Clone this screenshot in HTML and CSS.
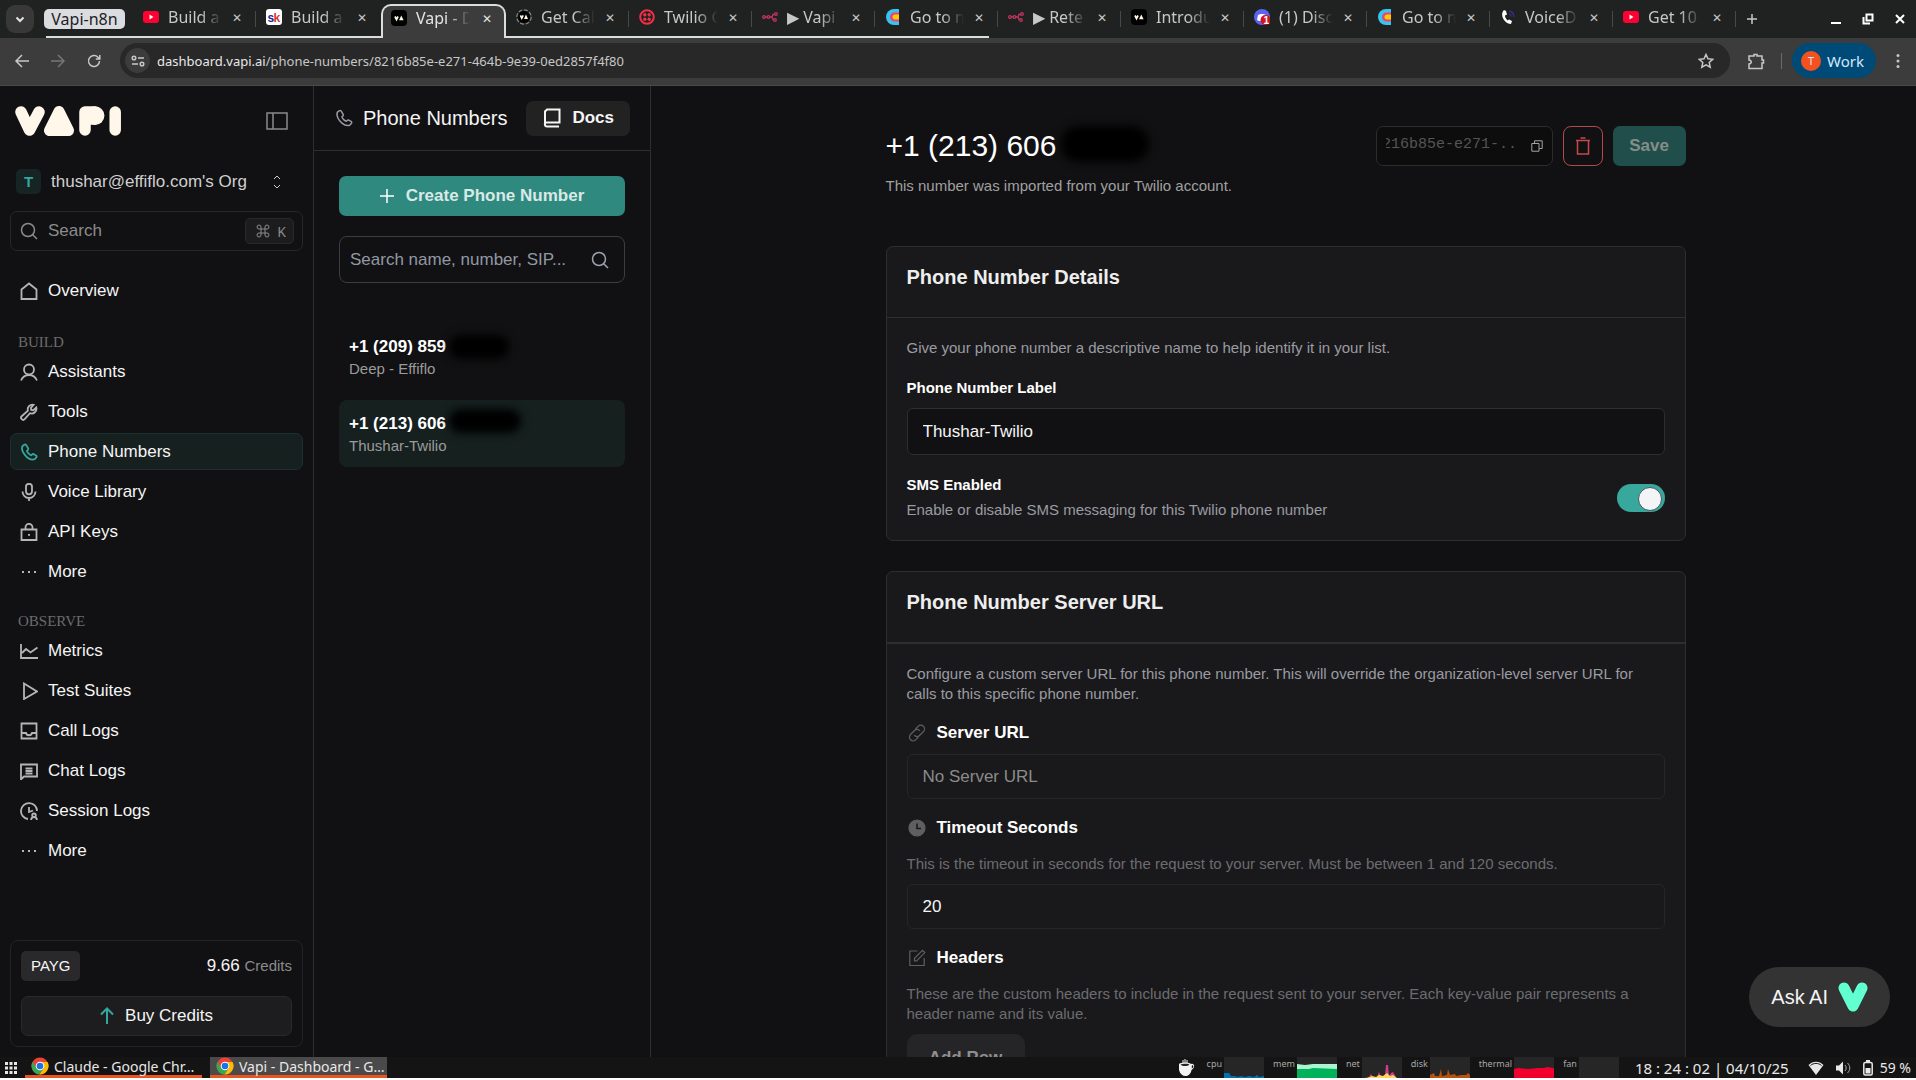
FILE: index.html
```html
<!DOCTYPE html>
<html lang="en">
<head>
  <meta charset="UTF-8">
  <title>Vapi - Dashboard</title>
  <link rel="stylesheet" href="styles.css">
</head>
<body>

<!-- Icon sprite -->
<svg class="sprite" aria-hidden="true">
  <symbol id="i-phone" viewBox="0 0 18 18"><path d="M4.2 1.8 2.6 3C.6 6.400 4 11.800 7 14.200c3 2.400 6 3 8.200 1.600l1.300-1.700c.4-.7.1-1.300-.5-1.700l-2.200-1.200c-.7-.3-1.300-.2-1.700.3l-.7.800c-1.600-.3-4-2.600-4.500-4.400l.9-.8c.5-.5.6-1 .3-1.700L6.600 2.600C6.100 1.600 5.200 1.200 4.200 1.800z"/></symbol>
  <symbol id="i-search" viewBox="0 0 18 18"><circle cx="8" cy="8" r="6.500"/><path d="M12.700 12.700 17 17"/></symbol>
  <symbol id="i-home" viewBox="0 0 18 18"><path d="M1.500 7.500 9 1.500l7.500 6V17h-15z"/></symbol>
  <symbol id="i-user" viewBox="0 0 18 18"><circle cx="9" cy="6.500" r="5"/><path d="M1 17.500c1.500-3.500 4.500-5.500 8-5.500s6.500 2 8 5.500"/></symbol>
  <symbol id="i-wrench" viewBox="0 0 18 18"><path d="M13.500 1.800a4.800 4.800 0 0 0-5.600 6L1.700 13.200a2 2 0 0 0 3 3L10 10.200a4.800 4.800 0 0 0 6.300-5.700l-3 2.700-2.100-.3-.3-2.100z"/></symbol>
  <symbol id="i-mic" viewBox="0 0 18 18"><rect x="6" y="0.800" width="6" height="10.500" rx="3"/><path d="M2.500 8.500a6.500 6.500 0 0 0 13 0M9 15v3"/></symbol>
  <symbol id="i-lock" viewBox="0 0 18 18"><path d="M1.500 6.500h15v10.500h-15zM5.500 6.500V4.300a3.500 3.500 0 0 1 7 0v2.200M8 11.800h2"/></symbol>
  <symbol id="i-dots" viewBox="0 0 18 18"><path d="M2 9h2M8 9h2M14 9h2"/></symbol>
  <symbol id="i-chart" viewBox="0 0 18 18"><path d="M1 2v14h17M2 11l4-4 4.500 3.500L17.500 5.500"/></symbol>
  <symbol id="i-play" viewBox="0 0 18 18"><path d="M4 1.500 17 9.500 4 17z"/></symbol>
  <symbol id="i-inbox" viewBox="0 0 18 18"><path d="M1.500 1.500h15v15h-15zM2 11h4c.5 3 5.500 3 6 0h4"/></symbol>
  <symbol id="i-chat" viewBox="0 0 18 18"><path d="M1 2.500h16v12H4L1 17.500zM5.500 6.500h7M5.500 9h7M5.500 11.500h7"/></symbol>
  <symbol id="i-session" viewBox="0 0 18 18"><path d="M8 17A8 8 0 1 1 17 9M9 5v5l4-1.500M11 18c.3-2 1.500-3 3-3s2.700 1 3 3"/><circle cx="14" cy="13.300" r="1.800"/></symbol>
  <symbol id="i-copy" viewBox="0 0 12 12"><path d="M.8 3.500H8v7.700H.8zM3.500 3.200V.8h7.700v7.700H8.300"/></symbol>
  <symbol id="i-chrome" viewBox="0 0 18 18"><circle cx="9" cy="9" r="8.500" fill="#ea4335"/><path d="M1.600 4.800A8.500 8.500 0 0 0 8.500 17.500L12.700 11 6 12z" fill="#34a853"/><path d="M16.500 5H9l4 6-4.500 6.500A8.500 8.500 0 0 0 16.500 5z" fill="#fbbc04"/><circle cx="9" cy="9" r="4.300" fill="#fff"/><circle cx="9" cy="9" r="3.300" fill="#1a73e8"/></symbol>
  <symbol id="i-yt" viewBox="0 0 16 16"><rect y="2" width="16" height="12" rx="3" fill="#ff0033"/><path d="M6.500 5.500v5l4-2.500z" fill="#fff"/></symbol>
  <symbol id="i-va" viewBox="0 0 16 16"><rect width="16" height="16" rx="4" fill="#000"/><path d="m4 6.500 1.500 3L7 6.500" fill="none" stroke="#fff8e7" stroke-width="1.800"/><path d="m10.300 5.500 2.300 4.800H8z" fill="#fff8e7"/></symbol>
  <symbol id="i-n8n" viewBox="0 0 16 16"><g fill="none" stroke="#c2345f" stroke-width="1.300"><circle cx="2" cy="8" r="1.300"/><circle cx="6.500" cy="8" r="1.300"/><path d="M3.300 8h2M8 8h2l1-2.500h2M10 8l1 2.500h1"/><circle cx="14" cy="5" r="1.300"/><circle cx="13" cy="11" r="1.300"/></g></symbol>
  <symbol id="i-goto" viewBox="0 0 16 16"><path d="M14 0H9a8 8 0 0 0 0 16h5z" fill="#36c5f0"/><path d="M14 3.500H9.500a4.500 4.500 0 0 0 0 9H14z" fill="#e8447a"/><path d="M14 5.500h-4a2.500 2.500 0 0 0 0 5h4z" fill="#ffc900"/></symbol>
</svg>

<!-- Browser tabs -->
<header class="tabstrip">
  <button class="tab-search" aria-label="Search tabs"><svg viewBox="0 0 10 10"><path d="m1.500 3.500 3.500 3.500 3.500-3.500"/></svg></button>
  <button class="tab-group">Vapi-n8n</button>
  <nav class="tabs">
    <div class="tab grouped"><svg class="favicon"><use href="#i-yt"/></svg><a href="#">Build a</a><button aria-label="Close">✕</button></div>
    <div class="tab grouped before-active"><svg class="favicon" viewBox="0 0 16 16"><rect width="16" height="16" rx="3" fill="#fff"/><text x="1.500" y="12.500" class="sk-blue">s</text><text x="7.500" y="12.500" class="sk-red">k</text></svg><a href="#">Build a</a><button aria-label="Close">✕</button></div>
    <div class="tab active"><svg class="favicon"><use href="#i-va"/></svg><a href="#">Vapi - D</a><button aria-label="Close">✕</button></div>
    <div class="tab grouped"><svg class="favicon" viewBox="0 0 20 20"><circle cx="10" cy="10" r="9" fill="none" stroke="#888" stroke-width="1.500" stroke-dasharray="5 2"/><circle cx="10" cy="10" r="7.500" fill="#000"/><path d="m5.500 8 1.700 3.500L9 8" fill="none" stroke="#fff8e7" stroke-width="2"/><path d="m12.500 7 2.500 5.500h-5z" fill="#fff8e7"/></svg><a href="#">Get Cal</a><button aria-label="Close">✕</button></div>
    <div class="tab grouped"><svg class="favicon" viewBox="0 0 16 16"><circle cx="8" cy="8" r="6.800" fill="none" stroke="#f22f46" stroke-width="2"/><g fill="#f22f46"><circle cx="5.800" cy="5.800" r="1.700"/><circle cx="10.200" cy="5.800" r="1.700"/><circle cx="5.800" cy="10.200" r="1.700"/><circle cx="10.200" cy="10.200" r="1.700"/></g></svg><a href="#">Twilio C</a><button aria-label="Close">✕</button></div>
    <div class="tab grouped"><svg class="favicon"><use href="#i-n8n"/></svg><a href="#">▶ Vapi</a><button aria-label="Close">✕</button></div>
    <div class="tab grouped group-end"><svg class="favicon"><use href="#i-goto"/></svg><a href="#">Go to n</a><button aria-label="Close">✕</button></div>
    <div class="tab"><svg class="favicon"><use href="#i-n8n"/></svg><a href="#">▶ Rete</a><button aria-label="Close">✕</button></div>
    <div class="tab"><svg class="favicon"><use href="#i-va"/></svg><a href="#">Introdu</a><button aria-label="Close">✕</button></div>
    <div class="tab"><svg class="favicon" viewBox="0 0 16 16"><circle cx="8" cy="8" r="8" fill="#5865f2"/><path d="M4 6c2-1.500 6-1.500 8 0l1 5-2 1H5l-2-1z" fill="#fff"/><circle cx="11.500" cy="11" r="5" fill="#d9101c"/><text x="9.500" y="14.500" class="badge-num">1</text></svg><a href="#">(1) Disc</a><button aria-label="Close">✕</button></div>
    <div class="tab"><svg class="favicon"><use href="#i-goto"/></svg><a href="#">Go to n</a><button aria-label="Close">✕</button></div>
    <div class="tab"><svg class="favicon" viewBox="0 0 16 16"><path d="M4 1c-5 5 1 14 7 14l1-3-3-1.500-1.500 1C5.500 9.500 5 8 5 6.500L7 5.500 6 2z" fill="#fff"/><path d="M9 4.500c1.500.5 2 1.500 2 3M9.500 2c3 .8 4.500 3 4.300 6" fill="none" stroke="#3d2b8c" stroke-width="1.300"/></svg><a href="#">VoiceD</a><button aria-label="Close">✕</button></div>
    <div class="tab"><svg class="favicon"><use href="#i-yt"/></svg><a href="#">Get 10</a><button aria-label="Close">✕</button></div>
  </nav>
  <button class="new-tab" aria-label="New tab"><svg viewBox="0 0 12 12"><path d="M6 1v10M1 6h10"/></svg></button>
  <div class="window-buttons">
    <button aria-label="Minimize"><svg viewBox="0 0 12 12"><path d="M1 10h10"/></svg></button>
    <button aria-label="Restore"><svg viewBox="0 0 12 12"><path d="M4.500 1.500h6v6h-6zM1.500 4v6.500H8"/></svg></button>
    <button aria-label="Close window"><svg viewBox="0 0 12 12"><path d="m2 2 8 8M10 2l-8 8"/></svg></button>
  </div>
</header>

<div class="toolbar">
  <div class="nav-buttons">
    <button aria-label="Back"><svg viewBox="0 0 16 16"><path d="M15 8H2M8 2 2 8l6 6"/></svg></button>
    <button class="dim" aria-label="Forward"><svg viewBox="0 0 16 16"><path d="M1 8h13M8 2l6 6-6 6"/></svg></button>
    <button aria-label="Reload"><svg viewBox="0 0 16 16"><path d="M13.500 8A5.500 5.500 0 1 1 12 4.200l1.500 1.500M13.800 2v4h-4"/></svg></button>
  </div>
  <div class="omnibox">
    <button class="site-info" aria-label="Site information"><svg viewBox="0 0 14 14"><circle cx="3" cy="4" r="1.800"/><path d="M7 4h6M1 10h6"/><circle cx="11" cy="10" r="1.800"/></svg></button>
    <a class="url" href="#"><span>dashboard.vapi.ai</span>/phone-numbers/8216b85e-e271-464b-9e39-0ed2857f4f80</a>
    <button class="star" aria-label="Bookmark"><svg viewBox="0 0 16 16"><path d="m8 1.500 2 4.300 4.700.5-3.500 3.200 1 4.700L8 11.800l-4.200 2.400 1-4.700L1.300 6.300 6 5.800z"/></svg></button>
  </div>
  <button class="extensions" aria-label="Extensions"><svg viewBox="0 0 18 18"><path d="M2 4h5V2.500h3V4h5v4h1.500v3H15v5.500H2V12c3-.5 3-3.500 0-4z"/></svg></button>
  <span class="divider"></span>
  <button class="profile"><span class="avatar">T</span>Work</button>
  <button class="kebab" aria-label="Menu"><svg viewBox="0 0 4 16"><circle cx="2" cy="2.500" r="1.500"/><circle cx="2" cy="8" r="1.500"/><circle cx="2" cy="13.500" r="1.500"/></svg></button>
</div>

<div class="app">
  <aside class="sidebar">
    <div class="logo-row">
      <svg class="logo" viewBox="0 0 106 30" aria-label="Vapi">
        <path d="M6 6 14.500 24 24 6" fill="none" stroke="#fff8ea" stroke-width="11.500" stroke-linecap="round" stroke-linejoin="round"/>
        <path d="M44 5.500 34.500 24.500H53.500z" fill="#fff8ea" stroke="#fff8ea" stroke-width="11" stroke-linejoin="round"/>
        <path d="M70 6v18M70 6h9.500M70 13h9.500" fill="none" stroke="#fff8ea" stroke-width="11.500" stroke-linecap="round"/>
        <circle cx="80" cy="9.600" r="9.400" fill="#fff8ea"/>
        <path d="M100.200 6v18" fill="none" stroke="#fff8ea" stroke-width="11.500" stroke-linecap="round"/>
      </svg>
      <button class="collapse" aria-label="Toggle sidebar"><svg viewBox="0 0 22 18"><path d="M1 1h20v16H1zM7 1v16"/></svg></button>
    </div>
    <button class="org">
      <span class="org-badge">T</span>
      <span class="org-name">thushar@effiflo.com's Org</span>
      <svg viewBox="0 0 8 14"><path d="m1 4 3-3 3 3M1 10l3 3 3-3"/></svg>
    </button>
    <div class="search">
      <svg class="icon"><use href="#i-search"/></svg>
      <input type="text" placeholder="Search" aria-label="Search">
      <kbd><svg viewBox="0 0 14 14"><path d="M5 5h4v4H5zM5 5V3a2 2 0 1 0-2 2zM9 5h2a2 2 0 1 0-2-2zM9 9v2a2 2 0 1 0 2-2zM5 9H3a2 2 0 1 0 2 2z"/></svg>K</kbd>
    </div>

    <nav class="menu">
      <a class="overview" href="#"><svg class="icon"><use href="#i-home"/></svg>Overview</a>
      <h2>BUILD</h2>
      <ul>
        <li><a href="#"><svg class="icon"><use href="#i-user"/></svg>Assistants</a></li>
        <li><a href="#"><svg class="icon"><use href="#i-wrench"/></svg>Tools</a></li>
        <li><a class="current" href="#"><svg class="icon"><use href="#i-phone"/></svg>Phone Numbers</a></li>
        <li><a href="#"><svg class="icon"><use href="#i-mic"/></svg>Voice Library</a></li>
        <li><a href="#"><svg class="icon"><use href="#i-lock"/></svg>API Keys</a></li>
        <li><a href="#"><svg class="icon"><use href="#i-dots"/></svg>More</a></li>
      </ul>
      <h2>OBSERVE</h2>
      <ul>
        <li><a href="#"><svg class="icon"><use href="#i-chart"/></svg>Metrics</a></li>
        <li><a href="#"><svg class="icon"><use href="#i-play"/></svg>Test Suites</a></li>
        <li><a href="#"><svg class="icon"><use href="#i-inbox"/></svg>Call Logs</a></li>
        <li><a href="#"><svg class="icon"><use href="#i-chat"/></svg>Chat Logs</a></li>
        <li><a href="#"><svg class="icon"><use href="#i-session"/></svg>Session Logs</a></li>
        <li><a href="#"><svg class="icon"><use href="#i-dots"/></svg>More</a></li>
      </ul>
    </nav>

    <div class="credits">
      <div class="credits-row">
        <span class="plan">PAYG</span>
        <span class="balance">9.66 <small>Credits</small></span>
      </div>
      <button class="buy"><svg viewBox="0 0 14 18"><path d="M7 17V1.500M1 7.500l6-6 6 6"/></svg>Buy Credits</button>
    </div>
  </aside>

  <section class="panel">
    <div class="panel-header">
      <svg class="icon"><use href="#i-phone"/></svg>
      <h1>Phone Numbers</h1>
      <a class="docs" href="#"><svg viewBox="0 0 18 20"><path d="M2 17V3.500L4 1.500h12.500v13H3.500C1 15 1.500 18.500 4 18.500h12"/></svg>Docs</a>
    </div>
    <div class="panel-body">
      <button class="create"><svg viewBox="0 0 14 14"><path d="M7 0v14M0 7h14"/></svg>Create Phone Number</button>
      <div class="number-search">
        <input type="text" placeholder="Search name, number, SIP..." aria-label="Search numbers">
        <svg class="icon"><use href="#i-search"/></svg>
      </div>
      <ul class="numbers">
        <li><a href="#"><strong>+1 (209) 859<i class="smudge"></i></strong><span>Deep - Effiflo</span></a></li>
        <li><a class="selected" href="#"><strong>+1 (213) 606<i class="smudge wide"></i></strong><span>Thushar-Twilio</span></a></li>
      </ul>
    </div>
  </section>

  <main class="main">
    <div class="content">
      <div class="page-header">
        <h1>+1 (213) 606<i class="smudge big"></i></h1>
        <div class="actions">
          <button class="id-copy" aria-label="Copy id"><span class="id-clip"><span>216b85e-e271-..</span></span><svg><use href="#i-copy"/></svg></button>
          <button class="delete" aria-label="Delete"><svg viewBox="0 0 16 18"><path d="M1 3.500h14M5.500 1h5M2.500 3.500V17h11V3.500"/></svg></button>
          <button class="save">Save</button>
        </div>
      </div>
      <p class="imported">This number was imported from your Twilio account.</p>

      <section class="card">
        <h2>Phone Number Details</h2>
        <div class="card-body">
          <p>Give your phone number a descriptive name to help identify it in your list.</p>
          <label class="small-label" for="numberLabel">Phone Number Label</label>
          <input class="field" type="text" id="numberLabel" value="Thushar-Twilio">
          <div class="sms">
            <div>
              <label for="smsEnabled">SMS Enabled</label>
              <p>Enable or disable SMS messaging for this Twilio phone number</p>
            </div>
            <input class="toggle" type="checkbox" role="switch" id="smsEnabled" checked>
          </div>
        </div>
      </section>

      <section class="card server">
        <h2>Phone Number Server URL</h2>
        <div class="card-body">
          <p>Configure a custom server URL for this phone number. This will override the organization-level server URL for calls to this specific phone number.</p>
          <label class="icon-label" for="serverUrl"><svg viewBox="0 0 18 18"><path d="m7.500 5 2.600-2.700a3.700 3.700 0 0 1 5.400 5.200l-4 4a3.500 3.500 0 0 1-5.300-.3M10.500 13l-2.600 2.700a3.700 3.700 0 0 1-5.400-5.200l4-4a3.500 3.500 0 0 1 5.300.3"/></svg>Server URL</label>
          <input class="field" type="text" id="serverUrl" placeholder="No Server URL">
          <label class="icon-label" for="timeout"><svg viewBox="0 0 18 18"><circle class="clock" cx="9" cy="9" r="8"/><path class="hands" d="M9 4.500V9.500h4"/></svg>Timeout Seconds</label>
          <p class="muted">This is the timeout in seconds for the request to your server. Must be between 1 and 120 seconds.</p>
          <input class="field" type="text" id="timeout" value="20">
          <h3 class="icon-label"><svg viewBox="0 0 18 18"><path d="M9.500 2H1.800v14.500h14.400V9M6.500 11.800V9.300l8-8 2.300 2.300-8.200 8.200z"/></svg>Headers</h3>
          <p class="muted">These are the custom headers to include in the request sent to your server. Each key-value pair represents a header name and its value.</p>
          <button class="add-row">Add Row</button>
        </div>
      </section>
    </div>
  </main>

  <button class="ask-ai">Ask AI<svg viewBox="0 0 30 30"><path d="M6 6l9 18 9-18" fill="none" stroke="#62ffd0" stroke-width="11" stroke-linecap="round" stroke-linejoin="round"/></svg></button>
</div>

<!-- Desktop taskbar -->
<footer class="taskbar">
  <button class="apps" aria-label="Applications"><svg viewBox="0 0 12 12"><path d="M0 1.500h12M0 6h12M0 10.500h12"/></svg></button>
  <button class="task"><svg><use href="#i-chrome"/></svg><span>Claude - Google Chr…</span></button>
  <button class="task focused"><svg><use href="#i-chrome"/></svg><span>Vapi - Dashboard - G…</span></button>
  <div class="tray">
    <svg class="cup" viewBox="0 0 17 17"><path d="M1 5c2-2 10-2 12 0 3-1.500 5 3 .5 6C12 19 3 19 1 11zm12.800 1.500v3c2.200-1 2-4 0-3z" fill="#f2f2f2"/><path d="M2.500 5.500c3-1.500 7-1.500 9 0-2 2-7 2-9 0z" fill="#222"/><path d="M5 5V1M7 5V0M9 5V1" stroke="#f2f2f2"/></svg>
    <div class="meter"><span>cpu</span><svg viewBox="0 0 40 21" preserveAspectRatio="none"><path d="M0 21v-5h5l2 3h4l2 1 4-1 4 1 4-1 5 1 3-2 2 2 5-1v3z" fill="#0072b3"/></svg></div>
    <div class="meter"><span>mem</span><svg viewBox="0 0 40 21" preserveAspectRatio="none"><path d="M0 21V7l8 1 8-1h24v14z" fill="#aaf5d0"/><path d="M0 21v-9l12 0 4-1 24 1v9z" fill="#00b35b"/></svg></div>
    <div class="meter"><span>net</span><svg viewBox="0 0 40 21" preserveAspectRatio="none"><path d="M3 21l4-1 2-3 2 3 4 0 2-5 2 5 4-1 1-11h2l1 11 2-3 2-1 3 5v1z" fill="#ce3d8c"/><path d="M5 21l5-2 4 1 3-2 4 1 4-3 3 3 3-1 4 3z" fill="#ffd35c"/></svg></div>
    <div class="meter"><span>disk</span><svg viewBox="0 0 40 21" preserveAspectRatio="none"><path d="M0 21v-3l4-2 1 3 4 0 2-7 1 7 5-1 1-6 2 6 5-1 1 2 5-1 5 0 2-2 2 2v3z" fill="#b65311"/></svg></div>
    <div class="meter"><span>thermal</span><svg viewBox="0 0 40 21" preserveAspectRatio="none"><path d="M0 21V12l4-1 10 1 10-1 6 0 3-1 7 1v10z" fill="#f2002d"/></svg></div>
    <div class="meter"><span>fan</span><svg viewBox="0 0 40 21"></svg></div>
    <time class="clock-text">18 : 24 : 02 | 04/10/25</time>
    <svg class="tray-icon" viewBox="0 0 16 16"><path d="M.5 5c4-4.500 11-4.500 15 0L8 15z" fill="#e8e8e8"/><path d="M2.500 5.500c3-2.800 8-2.800 11 0" stroke="#141414" fill="none"/></svg>
    <svg class="tray-icon" viewBox="0 0 16 16"><path d="M1 5.500h3L8 1.500v13l-4-4H1z" fill="#e8e8e8"/><path d="M10 5c1.500 1.500 1.500 4.500 0 6M12.500 3c3 3 3 7 0 10" stroke="#aaa" fill="none"/></svg>
    <svg class="battery" viewBox="0 0 12 16"><path d="M4 0h4v2H4z" fill="#e8e8e8"/><rect x="1.800" y="2.500" width="8.400" height="12.500" rx="1.500" fill="none" stroke="#e8e8e8" stroke-width="1.500"/><path d="M3.500 8h5v5.500h-5z" fill="#e8e8e8"/></svg>
    <span class="percent">59 %</span>
  </div>
</footer>

</body>
</html>
```
FILE: styles.css
```css
* {
  box-sizing: border-box;
}

body {
  margin: 0;
  padding-bottom: 2px;
  height: 100vh;
  overflow: hidden;
  display: flex;
  flex-direction: column;
  background: #ffffff;
  color: #f5f5f5;
  font-family: "Liberation Sans", Arial, sans-serif;
  font-size: 17px;
}

h1, h2, h3, p, ul {
  margin: 0;
  padding: 0;
  font-weight: normal;
}

ul {
  list-style: none;
}

a {
  color: inherit;
  text-decoration: none;
}

button {
  border: none;
  padding: 0;
  background: none;
  color: inherit;
  font: inherit;
  cursor: pointer;
}

input {
  font: inherit;
  color: inherit;
  outline: none;
}

svg {
  display: block;
  flex: none;
  fill: none;
  stroke: currentColor;
}

.sprite {
  position: absolute;
  width: 0;
  height: 0;
}

.icon {
  width: 18px;
  height: 18px;
  stroke-width: 1.5;
}

/* Tabs */
.tabstrip {
  flex: none;
  height: 38px;
  display: flex;
  align-items: center;
  padding: 0 10px 0 6px;
  background: linear-gradient(#dadce0, #dadce0) 46px 36px / 90px 2px no-repeat #202221;
  color: #c7c7c7;
  font-family: "Noto Sans", sans-serif;
  font-size: 16px;
}

.tab-search {
  width: 28px;
  height: 28px;
  display: grid;
  place-items: center;
  border-radius: 9px;
  background: #383838;
  color: #e3e3e3;
}

.tab-search svg {
  width: 10px;
  stroke-width: 2;
}

.tab-group {
  width: 81px;
  height: 20px;
  margin-left: 10px;
  border-radius: 5px;
  background: #dadce0;
  color: #202124;
  line-height: 20px;
}

.tabs {
  display: flex;
  align-self: stretch;
  margin-left: 8px;
}

.tab {
  width: 123px;
  display: flex;
  align-items: center;
  padding: 0 12px 2px 10px;
  border-bottom: 2px solid transparent;
  background: linear-gradient(#47494a, #47494a) right 11px / 1px 16px no-repeat;
}

.tab.grouped {
  border-bottom-color: #dadce0;
}

.tab.group-end {
  border-image: linear-gradient(to right, #dadce0 92%, transparent 92%) 1;
}

.tab.before-active {
  width: 125px;
  background: none;
}

.tab.active {
  width: 125px;
  margin-top: 4px;
  border: 2px solid #dadce0;
  border-bottom: none;
  border-radius: 10px 10px 0 0;
  padding: 0 10px 8px 8px;
  background: #3c3c3c;
  color: #e3e3e3;
}

.tab a {
  width: 54px;
  margin-left: 9px;
  overflow: hidden;
  white-space: nowrap;
  -webkit-mask-image: linear-gradient(to right, #000 60%, transparent);
  mask-image: linear-gradient(to right, #000 60%, transparent);
}

.tab button {
  width: 14px;
  margin-left: auto;
  font-size: 12px;
}

.favicon {
  width: 16px;
  height: 16px;
  stroke: none;
}

.sk-blue,
.sk-red {
  font: bold 12px "Liberation Sans", sans-serif;
  fill: #20249c;
}

.sk-red {
  fill: #e03131;
}

.badge-num {
  font: bold 10px "Liberation Sans", sans-serif;
  fill: #ffffff;
}

.new-tab {
  margin-left: 10px;
}

.new-tab svg {
  width: 12px;
  stroke-width: 1.5;
}

.window-buttons {
  display: flex;
  gap: 20px;
  margin-left: auto;
  color: #ffffff;
}

.window-buttons svg {
  width: 12px;
  stroke-width: 2;
}

/* Toolbar */
.toolbar {
  flex: none;
  height: 48px;
  display: flex;
  align-items: center;
  padding: 0 16px 2px 14px;
  background: #3c3c3c;
  border-bottom: 1px solid #4a4a4a;
  color: #c7c7c7;
  font-family: "Noto Sans", sans-serif;
}

.nav-buttons {
  display: flex;
  gap: 20px;
}

.nav-buttons svg {
  width: 16px;
  stroke-width: 1.5;
}

.nav-buttons .dim {
  color: #757575;
}

.omnibox {
  flex: 1;
  height: 35px;
  display: flex;
  align-items: center;
  margin-left: 18px;
  padding: 0 16px 0 5px;
  border-radius: 18px;
  background: #282828;
}

.site-info {
  width: 25px;
  height: 25px;
  display: grid;
  place-items: center;
  border-radius: 50%;
  background: #3c3c3c;
}

.site-info svg {
  width: 14px;
  stroke-width: 1.5;
}

.url {
  flex: 1;
  margin-left: 7px;
  font-size: 13px;
}

.url span {
  color: #e8e8e8;
}

.star svg {
  width: 16px;
  stroke-width: 1.5;
}

.extensions {
  margin-left: 17px;
}

.extensions svg {
  width: 18px;
  stroke-width: 1.5;
}

.divider {
  width: 1px;
  height: 16px;
  margin: 0 10px 0 16px;
  background: #6a6a6a;
}

.profile {
  height: 35px;
  display: flex;
  align-items: center;
  gap: 6px;
  padding: 0 12px 0 9px;
  border-radius: 18px;
  background: #004a77;
  color: #d3e8ff;
  font-size: 15px;
}

.avatar {
  width: 20px;
  line-height: 20px;
  border-radius: 50%;
  background: #f4511e;
  font-size: 11px;
}

.kebab {
  margin-left: 20px;
}

.kebab svg {
  width: 4px;
  fill: currentColor;
  stroke: none;
}

/* App */
.app {
  flex: 1;
  min-height: 0;
  display: flex;
  position: relative;
  background: #111113;
}

.sidebar {
  flex: none;
  width: 314px;
  display: flex;
  flex-direction: column;
  padding: 20px 10px 10px;
  border-right: 1px solid #2e2e31;
}

.logo-row {
  display: flex;
  align-items: center;
  justify-content: space-between;
  padding: 0 15px 0 5px;
}

.logo {
  width: 106px;
  height: 30px;
  stroke: none;
}

.collapse {
  color: #8b8b8b;
}

.collapse svg {
  width: 22px;
  stroke-width: 1.5;
}

.org {
  display: flex;
  align-items: center;
  margin-top: 33px;
  padding: 0 22px 0 6px;
  color: #cfcfcf;
}

.org-badge {
  width: 25px;
  line-height: 25px;
  border-radius: 5px;
  background: #162423;
  color: #35a79c;
  font-size: 15px;
  font-weight: bold;
}

.org-name {
  margin-left: 10px;
}

.org svg {
  width: 8px;
  margin-left: auto;
}

.search {
  height: 40px;
  display: flex;
  align-items: center;
  margin-top: 17px;
  padding: 0 8px 0 9px;
  border: 1px solid #27272a;
  border-radius: 7px;
  color: #8b8b8b;
}

.search input {
  flex: 1;
  min-width: 0;
  margin-left: 10px;
  padding: 0;
  border: none;
  background: none;
}

input::placeholder {
  color: #8b8b8b;
  opacity: 1;
}

kbd {
  display: flex;
  align-items: center;
  gap: 7px;
  height: 26px;
  padding: 0 7px 0 10px;
  border: 1px solid #29292c;
  border-radius: 5px;
  background: #1c1c1f;
  font-family: "Noto Sans", sans-serif;
  font-size: 14px;
}

kbd svg {
  width: 14px;
}

.menu h2 {
  margin: 23px 0 1px;
  padding-left: 8px;
  color: #6b6b6b;
  font-family: "Liberation Serif", "Times New Roman", serif;
  font-size: 15px;
  line-height: 20px;
}

.menu ul + h2 {
  margin-top: 21px;
}

.menu ul {
  display: flex;
  flex-direction: column;
  gap: 3px;
}

.menu a {
  height: 37px;
  display: flex;
  align-items: center;
  gap: 10px;
  padding-left: 9px;
  border: 1px solid transparent;
  border-radius: 7px;
}

.menu .overview {
  margin-top: 21px;
}

.menu .icon {
  color: #b5b5b5;
  stroke-width: 1.8;
}

.menu .current {
  border-color: #1b3230;
  background: #16201f;
}

.menu .current .icon {
  color: #35a79c;
}

.credits {
  margin-top: auto;
  display: flex;
  flex-direction: column;
  gap: 15px;
  padding: 10px;
  border: 1px solid #232326;
  border-radius: 8px;
}

.credits-row {
  display: flex;
  align-items: center;
  justify-content: space-between;
}

.plan {
  padding: 0 10px;
  border-radius: 5px;
  background: #29292b;
  font-size: 15px;
  line-height: 30px;
}

.balance small {
  color: #8b8b8b;
  font-size: 15px;
}

.buy {
  height: 40px;
  display: flex;
  align-items: center;
  justify-content: center;
  gap: 11px;
  border: 1px solid #29292b;
  border-radius: 7px;
  background: #1d1d1f;
}

.buy svg {
  width: 14px;
  stroke: #35a79c;
  stroke-width: 2;
}

/* Number list panel */
.panel {
  flex: none;
  width: 337px;
  border-right: 1px solid #2e2e31;
}

.panel-header {
  height: 65px;
  display: flex;
  align-items: center;
  padding: 0 20px 0 21px;
  border-bottom: 1px solid #2e2e31;
}

.panel-header .icon {
  color: #9b9ba5;
}

.panel-header h1 {
  margin-left: 10px;
  font-size: 20px;
}

.docs {
  height: 35px;
  display: flex;
  align-items: center;
  gap: 11px;
  margin-left: auto;
  padding: 0 16px 0 17px;
  border-radius: 7px;
  background: #222223;
  font-weight: bold;
}

.docs svg {
  width: 18px;
  stroke-width: 2;
}

.panel-body {
  padding: 25px;
}

.create {
  width: 100%;
  height: 40px;
  display: flex;
  align-items: center;
  justify-content: center;
  gap: 12px;
  border-radius: 7px;
  background: #2f897f;
  color: #d9e9e6;
  font-weight: bold;
}

.create svg {
  width: 14px;
  stroke: #ffffff;
  stroke-width: 1.5;
}

.number-search {
  height: 47px;
  display: flex;
  align-items: center;
  margin-top: 20px;
  padding: 0 15px 0 10px;
  border: 1px solid #3d3d41;
  border-radius: 8px;
  color: #9ca3af;
}

.number-search input {
  flex: 1;
  min-width: 0;
  padding: 0;
  border: none;
  background: none;
}

.number-search input::placeholder {
  color: #9298a3;
}

.numbers {
  display: flex;
  flex-direction: column;
  gap: 10px;
  margin-top: 40px;
}

.numbers a {
  display: flex;
  flex-direction: column;
  padding: 11px 10px;
  border-radius: 8px;
}

.numbers .selected {
  background: #16201f;
}

.numbers strong {
  position: relative;
  color: #ffffff;
  line-height: 25px;
}

.numbers span {
  color: #9b9b9b;
  font-size: 15px;
  line-height: 20px;
}

/* Painted-over digits */
.smudge {
  position: absolute;
  left: 100px;
  top: 1px;
  width: 60px;
  height: 24px;
  border-radius: 12px;
  background: #000000;
  filter: blur(4px);
}

.smudge.wide {
  width: 72px;
  top: -2px;
}

.smudge.big {
  left: 175px;
  top: 0;
  width: 88px;
  height: 36px;
  border-radius: 18px;
}

/* Main */
.main {
  flex: 1;
  min-width: 0;
  overflow: hidden;
  padding: 40px 16px 0 20px;
}

.content {
  max-width: 800px;
  margin: 0 auto;
}

.page-header {
  display: flex;
  justify-content: space-between;
  align-items: center;
}

.page-header h1 {
  position: relative;
  font-size: 30px;
  line-height: 40px;
  color: #ffffff;
}

.actions {
  display: flex;
  gap: 10px;
}

.id-copy {
  width: 177px;
  height: 40px;
  display: flex;
  align-items: center;
  justify-content: space-between;
  padding: 0 9px;
  border: 1px solid #2c2c2e;
  border-radius: 7px;
  background: #0d0d0d;
}

.id-clip {
  width: 128px;
  display: flex;
  justify-content: center;
  overflow: hidden;
  padding-bottom: 3px;
  color: #555555;
  font: 15px/20px "Liberation Mono", monospace;
}

.id-clip span {
  flex: none;
}

.id-copy svg {
  width: 12px;
  height: 12px;
  color: #a5a5a5;
}

.delete {
  width: 40px;
  height: 40px;
  display: grid;
  place-items: center;
  border: 1px solid #b04a4c;
  border-radius: 8px;
  color: #c9474a;
}

.delete svg {
  width: 16px;
  stroke-width: 1.5;
}

.save {
  width: 73px;
  height: 40px;
  border-radius: 7px;
  background: #204e4a;
  color: #858d8b;
  font-weight: bold;
}

.imported {
  margin-top: 10px;
  color: #a0a0a0;
  font-size: 15px;
  line-height: 20px;
}

.card {
  margin-top: 50px;
  border: 1px solid #2e2e30;
  border-radius: 7px;
  background: #19191b;
}

.card + .card {
  margin-top: 30px;
}

.card h2 {
  padding: 18px 20px 28px;
  border-bottom: 1px solid #2e2e30;
  color: #eeeeee;
  font-size: 20px;
  font-weight: bold;
  line-height: 24px;
}

.server h2 {
  border-bottom-width: 2px;
}

.card-body {
  display: flex;
  flex-direction: column;
  padding: 20px;
  font-size: 15px;
  line-height: 20px;
}

.card-body p {
  color: #9b9ba2;
}

.card-body .muted {
  margin-top: 15px;
  color: #6c6c70;
}

.small-label,
.sms label {
  margin-top: 20px;
  color: #ffffff;
  font-weight: bold;
}

.field {
  width: 100%;
  height: 45px;
  margin-top: 10px;
  padding: 0 15px;
  border: 1px solid #262628;
  border-radius: 6px;
  background: #19191b;
  font-size: 17px;
}

#numberLabel {
  height: 47px;
  border-color: #2e2e30;
  background: #111113;
}

.sms {
  display: flex;
  align-items: center;
  justify-content: space-between;
  margin-top: 20px;
}

.sms p {
  margin-top: 5px;
}

.toggle {
  appearance: none;
  width: 48px;
  height: 28px;
  margin: 0;
  padding: 3px;
  display: flex;
  justify-content: flex-end;
  border-radius: 14px;
  background: #38a89d;
}

.toggle::before {
  content: "";
  width: 22px;
  height: 22px;
  border: 1px solid #4b5563;
  border-radius: 50%;
  background: #f3f4f6;
}

.icon-label {
  display: flex;
  align-items: center;
  gap: 11px;
  margin-top: 18px;
  padding-left: 1px;
  color: #ffffff;
  font-size: 17px;
  font-weight: bold;
  line-height: 22px;
}

.icon-label svg {
  width: 18px;
  stroke: #5f5f62;
  stroke-width: 1.2;
}

.icon-label .clock {
  fill: #5f5f62;
}

.icon-label .hands {
  stroke: #19191b;
  stroke-width: 1.5;
}

.add-row {
  align-self: flex-start;
  width: 118px;
  height: 47px;
  margin-top: 10px;
  border-radius: 10px;
  background: #252527;
  color: #8f8f91;
  font-size: 17px;
  font-weight: bold;
}

.ask-ai {
  position: absolute;
  right: 26px;
  bottom: 30px;
  height: 60px;
  display: flex;
  align-items: center;
  gap: 10px;
  padding: 0 22px;
  border-radius: 30px;
  background: #333333;
  font-size: 20px;
}

.ask-ai svg {
  width: 30px;
}

/* Taskbar */
.taskbar {
  flex: none;
  height: 21px;
  display: flex;
  align-items: center;
  overflow: hidden;
  padding: 0 5px;
  background: #141414;
  color: #e8e8e8;
  font-family: "Noto Sans", sans-serif;
  font-size: 14px;
}

.apps svg {
  width: 12px;
  stroke-width: 3;
  stroke-dasharray: 3 1.5;
}

.task {
  width: 177px;
  height: 21px;
  display: flex;
  align-items: center;
  gap: 5px;
  margin-left: 8px;
  padding-left: 6px;
  border-bottom: 3px solid #e95420;
}

.task svg {
  width: 18px;
  height: 18px;
  stroke: none;
}

.task span {
  white-space: nowrap;
}

.focused {
  background: #4a4a4a;
}

.tray {
  height: 21px;
  display: flex;
  align-items: center;
  margin-left: auto;
}

.cup {
  width: 17px;
  margin-right: 3px;
  stroke: none;
}

.meter {
  height: 21px;
  display: flex;
  gap: 2px;
  margin-left: 9px;
  color: #a8a8a8;
  font-size: 9px;
  line-height: 13px;
}

.meter svg {
  width: 40px;
  height: 21px;
  background: #262626;
  stroke: none;
}

.clock-text {
  margin: 0 19px 0 16px;
  font-size: 15px;
}

.tray-icon {
  width: 16px;
  margin-right: 11px;
  stroke: none;
}

.battery {
  width: 12px;
  margin-right: 6px;
  stroke: none;
}
```
